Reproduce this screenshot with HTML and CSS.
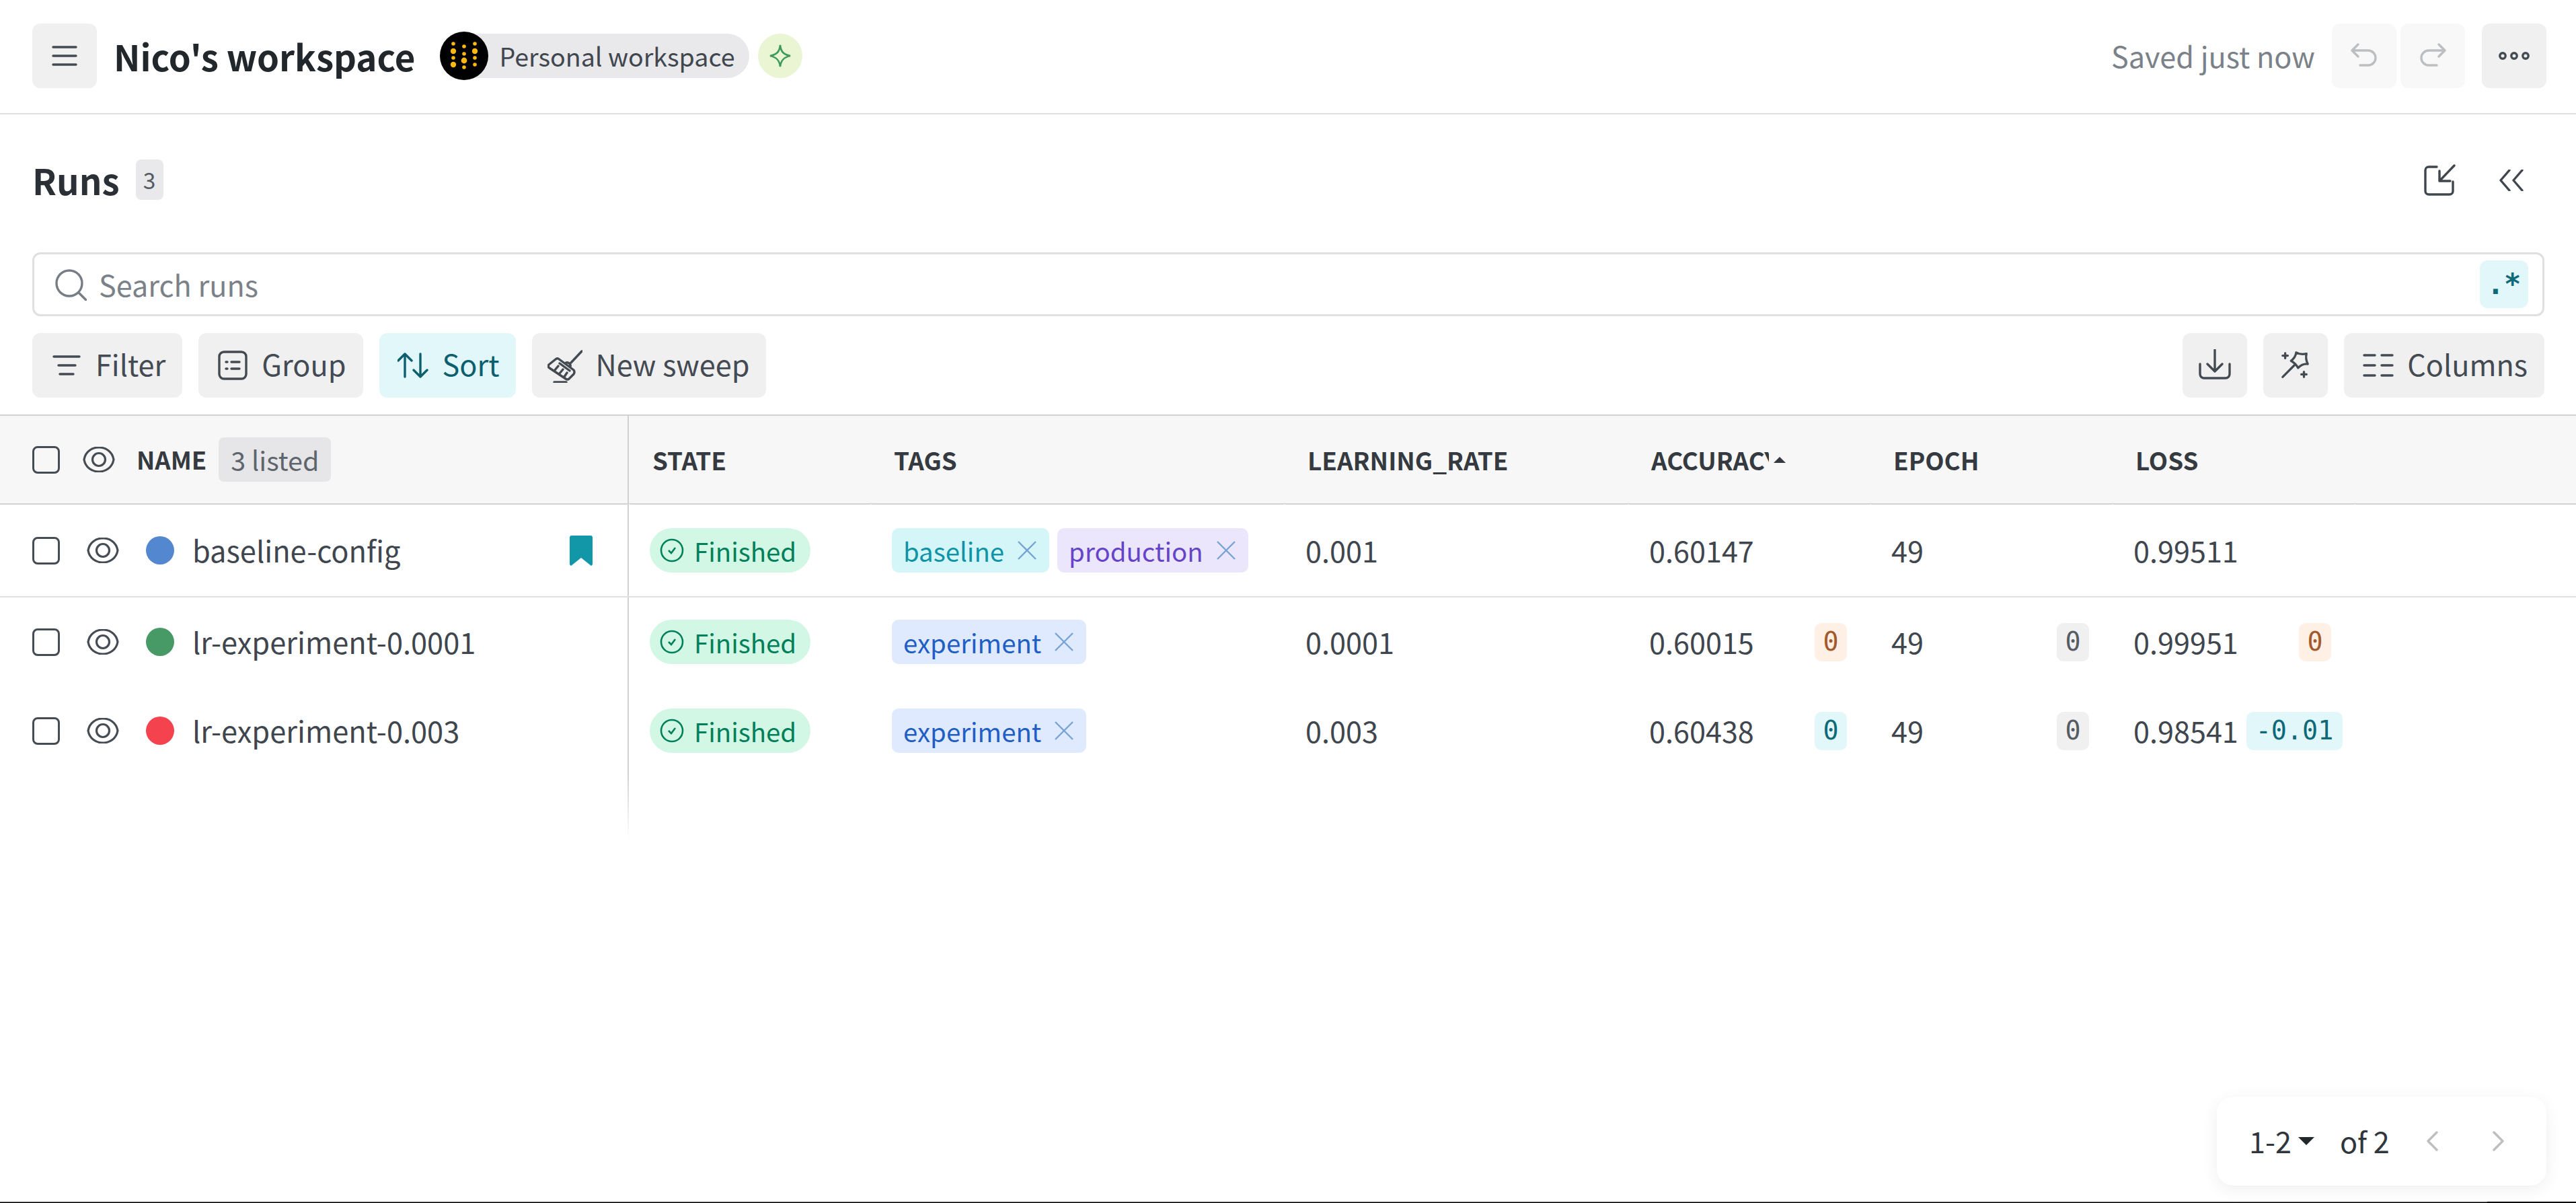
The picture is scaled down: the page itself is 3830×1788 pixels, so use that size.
FILE: index.html
```html
<!DOCTYPE html>
<html lang="en">
<head>
    <meta charset="UTF-8">
    <meta name="viewport" content="width=device-width, initial-scale=1.0">
    <link rel="stylesheet" href="styles.css">
    <title>Nico's workspace</title>
</head>
<body>
    <div class="page">
        <header class="topbar">
            <div class="btn btn-icon"><svg class="ico" viewBox="0 0 48 48"><path d="M7 11H41M7 24H41M7 37H41"/></svg></div>
            <h1 class="title">Nico's workspace</h1>
            <div class="ws-chip">
                <svg class="ws-avatar" viewBox="0 0 72 72">
                    <circle cx="36" cy="36" r="36" fill="#000"/>
                    <g fill="#fdb813">
                        <circle cx="20" cy="18" r="2.8"/><circle cx="20" cy="29" r="4.2"/><circle cx="20" cy="39" r="2.8"/><circle cx="20" cy="49" r="4.2"/>
                        <circle cx="36" cy="22" r="2.8"/><circle cx="36" cy="33" r="2.8"/><circle cx="36" cy="43" r="4.4"/><circle cx="36" cy="53" r="2.8"/>
                        <circle cx="52" cy="18" r="2.8"/><circle cx="52" cy="29" r="4.2"/><circle cx="52" cy="39" r="2.8"/><circle cx="52" cy="49" r="2.8"/>
                    </g>
                </svg>
                <span class="ws-name">Personal workspace</span>
            </div>
            <div class="spark"><svg viewBox="0 0 36 36"><path d="M18 2C19 12 23 16 33 18C23 20 19 25 18 34C17 25 13 20 3 18C13 16 17 12 18 2Z"/></svg></div>
            <div class="topbar-right">
                <span class="saved">Saved just now</span>
                <div class="undo-group">
                    <div class="btn btn-icon btn-faded"><svg class="ico" viewBox="0 0 48 48"><path d="M15 7L6 16L15 25M6 16H30a11 11 0 0 1 0 22H18"/></svg></div>
                    <div class="btn btn-icon btn-faded"><svg class="ico flip" viewBox="0 0 48 48"><path d="M15 7L6 16L15 25M6 16H30a11 11 0 0 1 0 22H18"/></svg></div>
                </div>
                <div class="btn btn-icon"><svg class="ico" viewBox="0 0 48 48"><circle cx="7" cy="24" r="4.2"/><circle cx="24" cy="24" r="4.2"/><circle cx="41" cy="24" r="4.2"/></svg></div>
            </div>
        </header>

        <div class="runs-head">
            <h2 class="runs-title">Runs</h2>
            <span class="runs-count">3</span>
            <div class="runs-actions">
                <svg class="ico" viewBox="0 0 48 48"><path d="M20 4H8a5 5 0 0 0-5 5V40a5 5 0 0 0 5 5H39a5 5 0 0 0 5-5V26M46 2L24 25M24 10V25H40"/></svg>
                <svg class="ico chev" viewBox="0 0 36 32"><path d="M15 1L2 16L15 31M34 1L21 16L34 31"/></svg>
            </div>
        </div>

        <div class="search">
            <svg class="ico search-ico" viewBox="0 0 48 48"><circle cx="22" cy="22" r="19"/><path d="M36 36L47 47"/></svg>
            <span class="search-text">Search runs</span>
            <span class="regex">.*</span>
        </div>

        <div class="toolbar">
            <div class="btn"><svg class="ico" viewBox="0 0 48 48"><path d="M5 11H43M12 24H37M14 37H34"/></svg>Filter</div>
            <div class="btn"><svg class="ico" viewBox="0 0 48 48"><rect x="4" y="4" width="40" height="40" rx="7"/><path d="M14 19H16M14 29H16M22 19H34M22 29H34"/></svg>Group</div>
            <div class="btn btn-on"><svg class="ico" viewBox="0 0 48 48"><path d="M11 41V7M1 17L11 7L21 17M34 7V41M24 31L34 41L44 31"/></svg>Sort</div>
            <div class="btn"><svg class="ico sweep" viewBox="14 10 52 52"><path d="M65 15L49 32M40 33a5 5 0 0 1 8 5M30 26L53 43Q55 46 53 49L46 56Q44 58 41 56L17 40Q14 38 16 35L26 27Q28 25 30 26ZM32 33L47 44M25 43L30 37M32 48L37 42M39 53L43 47M24 61H42"/></svg>New sweep</div>
            <div class="toolbar-right">
                <div class="btn btn-icon"><svg class="ico" viewBox="0 0 48 48"><path d="M24 1V32M13 22L24 33L35 22M2 22V37a6 6 0 0 0 6 6H40a6 6 0 0 0 6-6V22"/></svg></div>
                <div class="btn btn-icon"><svg class="ico" viewBox="10 8 50 50"><path d="M36 13Q42 17 52 15Q50 23 54 31Q46 30 39 37Q35 30 28 26Q35 21 36 13ZM15 51L33 33M15 18H23M19 14V22M44 47H52M48 43V51"/></svg></div>
                <div class="btn"><svg class="ico" viewBox="0 0 48 48"><path d="M3 9H19M29 9H45M3 24H19M29 24H45M3 39H19M29 39H45"/></svg>Columns</div>
            </div>
        </div>

        <div class="table">
            <div class="row row-head">
                <div class="cell-name">
                    <span class="check"></span>
                    <svg class="eye eye-head" viewBox="0 0 48 38"><path d="M2 19C6 -5 42 -5 46 19C42 43 6 43 2 19Z"/><circle cx="24" cy="19" r="9.5"/></svg>
                    <span class="name-label">NAME</span>
                    <span class="listed">3 listed</span>
                </div>
                <div class="th">STATE</div>
                <div class="th">TAGS</div>
                <div class="th">LEARNING_RATE</div>
                <div class="th"><span class="th-clip">ACCURACY</span><span class="sort-up"></span></div>
                <div class="th">EPOCH</div>
                <div class="th">LOSS</div>
                <div class="th"></div>
            </div>

            <div class="row row-first">
                <div class="cell-name">
                    <span class="check"></span>
                    <svg class="eye" viewBox="0 0 48 38"><path d="M2 19C6 -5 42 -5 46 19C42 43 6 43 2 19Z"/><circle cx="24" cy="19" r="9.5"/></svg>
                    <span class="dot dot-blue"></span>
                    <span class="run-name">baseline-config</span>
                    <svg class="bookmark" viewBox="0 0 34 45"><path d="M3 0H31a3 3 0 0 1 3 3V43L32 45L17 33L2 45L0 43V3a3 3 0 0 1 3-3Z"/></svg>
                </div>
                <div class="td td-state"><span class="state"><svg viewBox="0 0 36 36"><circle cx="18" cy="18" r="16"/><path d="M13 18L17 22L23 14"/></svg>Finished</span></div>
                <div class="td td-tags">
                    <span class="tag tag-teal">baseline<svg viewBox="0 0 28 28"><path d="M1 1L27 27M27 1L1 27"/></svg></span>
                    <span class="tag tag-purple">production<svg viewBox="0 0 28 28"><path d="M1 1L27 27M27 1L1 27"/></svg></span>
                </div>
                <div class="td">0.001</div>
                <div class="td">0.60147</div>
                <div class="td">49</div>
                <div class="td">0.99511</div>
                <div class="td"></div>
            </div>

            <div class="row">
                <div class="cell-name">
                    <span class="check"></span>
                    <svg class="eye" viewBox="0 0 48 38"><path d="M2 19C6 -5 42 -5 46 19C42 43 6 43 2 19Z"/><circle cx="24" cy="19" r="9.5"/></svg>
                    <span class="dot dot-green"></span>
                    <span class="run-name">lr-experiment-0.0001</span>
                </div>
                <div class="td td-state"><span class="state"><svg viewBox="0 0 36 36"><circle cx="18" cy="18" r="16"/><path d="M13 18L17 22L23 14"/></svg>Finished</span></div>
                <div class="td td-tags">
                    <span class="tag tag-blue">experiment<svg viewBox="0 0 28 28"><path d="M1 1L27 27M27 1L1 27"/></svg></span>
                </div>
                <div class="td">0.0001</div>
                <div class="td">0.60015<span class="delta delta-up">0</span></div>
                <div class="td">49<span class="delta">0</span></div>
                <div class="td">0.99951<span class="delta delta-up">0</span></div>
                <div class="td"></div>
            </div>

            <div class="row">
                <div class="cell-name">
                    <span class="check"></span>
                    <svg class="eye" viewBox="0 0 48 38"><path d="M2 19C6 -5 42 -5 46 19C42 43 6 43 2 19Z"/><circle cx="24" cy="19" r="9.5"/></svg>
                    <span class="dot dot-red"></span>
                    <span class="run-name">lr-experiment-0.003</span>
                </div>
                <div class="td td-state"><span class="state"><svg viewBox="0 0 36 36"><circle cx="18" cy="18" r="16"/><path d="M13 18L17 22L23 14"/></svg>Finished</span></div>
                <div class="td td-tags">
                    <span class="tag tag-blue">experiment<svg viewBox="0 0 28 28"><path d="M1 1L27 27M27 1L1 27"/></svg></span>
                </div>
                <div class="td">0.003</div>
                <div class="td">0.60438<span class="delta delta-down">0</span></div>
                <div class="td">49<span class="delta">0</span></div>
                <div class="td">0.98541<span class="delta delta-down delta-wide">-0.01</span></div>
                <div class="td"></div>
            </div>
            <div class="divider-fade"></div>
        </div>

        <div class="pager">
            <span>1-2</span><span class="pager-caret"></span>
            <span class="pager-of">of 2</span>
            <svg class="pager-arrow" viewBox="0 0 18 30"><path d="M16 2L3 15L16 28"/></svg>
            <svg class="pager-arrow pager-next" viewBox="0 0 18 30"><path d="M2 2L15 15L2 28"/></svg>
        </div>

        <div class="bottom-edge"><div class="bottom-edge-fill"></div></div>
    </div>
</body>
</html>
```

FILE: styles.css
```css
*{
    box-sizing: border-box;
}
body{
    margin: 0;
    background: #fff;
    color: #3f464e;
    font-family: "Noto Sans CJK JP", "Noto Sans", sans-serif;
    font-size: 38.4px;
    line-height: 1;
}
.page{
    position: relative;
    display: flex;
    flex-direction: column;
    height: 100vh;
    overflow: hidden;
}

/* icons */
.ico{
    width: 48px;
    height: 48px;
    flex: none;
    fill: none;
    stroke: currentColor;
    stroke-width: 3.4;
    stroke-linecap: round;
    stroke-linejoin: round;
}
.flip{
    transform: scaleX(-1);
}

/* buttons */
.btn{
    display: flex;
    align-items: center;
    gap: 19px;
    height: 96px;
    padding: 0 25px 0 27px;
    flex: none;
    border-radius: 12px;
    background: #f0f0f0;
    color: #434a52;
}
.btn-icon{
    justify-content: center;
    width: 96px;
    padding: 0;
}
.btn-faded{
    background: #f8f8f8;
    color: #bcbfc2;
}
.btn-on{
    background: #e1f7fa;
    color: #0e5f6e;
}

/* top bar */
.topbar{
    display: flex;
    align-items: center;
    flex: none;
    height: 170px;
    padding: 0 44px 2px 48px;
    border-bottom: 2px solid #e0e0e0;
}
.title{
    margin: 0 37px 0 25px;
    font-size: 52.8px;
    font-weight: 600;
    color: #22272c;
}
.ws-chip{
    display: flex;
    align-items: center;
    flex: none;
    height: 66px;
    width: 460px;
    border-radius: 33px;
    background: #e9e9eb;
}
.ws-avatar{
    width: 72px;
    height: 72px;
    flex: none;
}
.ws-name{
    margin-left: 16px;
    font-size: 37.6px;
    white-space: nowrap;
    color: #40474f;
}
.spark{
    display: flex;
    align-items: center;
    justify-content: center;
    width: 66px;
    height: 66px;
    margin-left: 13px;
    border-radius: 50%;
    background: #e9f5d3;
}
.spark svg{
    width: 36px;
    height: 36px;
    fill: none;
    stroke: #3f9a5f;
    stroke-width: 2.6;
}
.topbar-right{
    display: flex;
    align-items: center;
    margin-left: auto;
}
.saved{
    margin-right: 25px;
    font-size: 43.2px;
    color: #7b8189;
}
.undo-group{
    display: flex;
    gap: 6px;
    margin-right: 25px;
}

/* runs header */
.runs-head{
    display: flex;
    align-items: center;
    flex: none;
    height: 96px;
    margin-top: 49px;
    margin-bottom: 2px;
    padding: 0 78px 0 48px;
}
.runs-title{
    margin: 0 24px 0 0;
    font-size: 52.8px;
    font-weight: 600;
    color: #2b3036;
}
.runs-count{
    display: flex;
    align-items: center;
    justify-content: center;
    width: 41px;
    height: 60px;
    border-radius: 8px;
    background: #e9e9eb;
    font-size: 33.6px;
    color: #555c64;
}
.runs-actions{
    display: flex;
    align-items: center;
    gap: 65px;
    margin-left: auto;
    padding-top: 2px;
}
.chev{
    width: 36px;
    height: 32px;
}

/* search */
.search{
    display: flex;
    align-items: center;
    flex: none;
    height: 95px;
    margin: 58px 47px 0 48px;
    padding: 0 21px 0 30px;
    border: 3px solid #e0e0e0;
    border-radius: 12px;
}
.search-ico{
    color: #777d85;
}
.search-text{
    margin-left: 18px;
    font-size: 43.2px;
    color: #7b8189;
}
.regex{
    display: flex;
    align-items: center;
    justify-content: center;
    width: 72px;
    height: 71px;
    margin-left: auto;
    border-radius: 12px;
    background: #e1f7fa;
    font-family: "DejaVu Sans Mono", monospace;
    font-size: 42px;
    font-weight: 700;
    color: #0e6a78;
}

/* toolbar */
.toolbar{
    display: flex;
    gap: 24px;
    flex: none;
    margin-top: 25px;
    padding: 0 47px 0 48px;
    font-size: 43.2px;
}
.toolbar .btn{
    padding-bottom: 4px;
}
.toolbar .ico{
    margin-top: 4px;
}
.toolbar-right{
    display: flex;
    gap: 24px;
    margin-left: auto;
}
.sweep{
    width: 52px;
    height: 52px;
    margin-left: -4px;
}

/* table */
.table{
    flex: none;
    margin-top: 25px;
    border-top: 2px solid #d2d2d2;
}
.row{
    display: grid;
    grid-template-columns: 935px 359px 615px 511px 360px 360px 360px 1fr;
    height: 132px;
}
.row-head{
    background: #f7f7f7;
}
.row-head .cell-name{
    border-bottom: 2px solid #d2d2d2;
}
.row-first{
    height: 138px;
    border-bottom: 2px solid #e0e0e0;
}
.cell-name{
    display: flex;
    align-items: center;
    padding-left: 48px;
    border-right: 2px solid #d2d2d2;
}
.check{
    width: 41px;
    height: 41px;
    flex: none;
    border: 3.5px solid #454c54;
    border-radius: 8px;
}
.eye{
    width: 48px;
    height: 38px;
    flex: none;
    margin-left: 40px;
    fill: none;
    stroke: #454c54;
    stroke-width: 3.2;
}
.eye-head{
    margin-left: 34px;
}
.name-label{
    margin-left: 32px;
    font-size: 36.5px;
    font-weight: 600;
    color: #353a40;
}
.listed{
    display: flex;
    align-items: center;
    height: 66px;
    margin-left: 18px;
    padding: 0 18px;
    border-radius: 8px;
    background: #e6e6e8;
    font-size: 39.5px;
    color: #5f656c;
}
.dot{
    width: 42px;
    height: 42px;
    flex: none;
    margin-left: 40px;
    border-radius: 50%;
}
.dot-blue{
    background: #5387cf;
}
.dot-green{
    background: #479a66;
}
.dot-red{
    background: #f5424f;
}
.run-name{
    margin-left: 27px;
    font-size: 43.4px;
}
.bookmark{
    width: 34px;
    height: 45px;
    margin-left: auto;
    margin-right: 52px;
    fill: #1297a9;
}
.th{
    display: flex;
    align-items: center;
    padding-left: 35px;
    border-bottom: 2px solid #d2d2d2;
    border-bottom-left-radius: 3px;
    font-size: 36.8px;
    font-weight: 600;
    color: #353a40;
}
.th-clip{
    width: 175px;
    overflow: hidden;
    white-space: nowrap;
}
.sort-up{
    margin-left: 7px;
    border-left: 9px solid transparent;
    border-right: 9px solid transparent;
    border-bottom: 9px solid #353a40;
}
.td{
    display: flex;
    align-items: center;
    justify-content: space-between;
    padding: 0 34px 0 32px;
    font-size: 43.2px;
}
.td-state{
    padding-left: 31px;
    font-size: 38.4px;
}
.td-tags{
    justify-content: flex-start;
    gap: 12px;
    font-size: 38.4px;
}
.state{
    display: flex;
    align-items: center;
    gap: 15px;
    height: 66px;
    padding: 0 21px 0 15px;
    border-radius: 33px;
    background: #d2f7e4;
    color: #00805a;
}
.state svg{
    width: 36px;
    height: 36px;
    fill: none;
    stroke: currentColor;
    stroke-width: 2.6;
}
.tag{
    display: flex;
    align-items: center;
    gap: 20px;
    height: 66px;
    padding: 0 19px 0 17px;
    border-radius: 10px;
}
.tag svg{
    width: 28px;
    height: 28px;
    fill: none;
    stroke: #77a3d4;
    stroke-width: 2.4;
}
.tag-teal{
    background: #d4f6f8;
    color: #0f93a6;
}
.tag-purple{
    background: #ece6fd;
    color: #6544c9;
}
.tag-blue{
    background: #dfeafe;
    color: #1f5ec4;
}
.delta{
    display: flex;
    align-items: center;
    justify-content: center;
    width: 48px;
    height: 57px;
    border-radius: 10px;
    background: #f0f0f0;
    font-family: "DejaVu Sans Mono", monospace;
    font-size: 38.4px;
    color: #555c64;
}
.delta-up{
    background: #fff0e6;
    color: #a5592a;
}
.delta-down{
    background: #e1f7fa;
    color: #0e6a78;
}
.delta-wide{
    width: 143px;
    margin-right: -17px;
}
.divider-fade{
    width: 935px;
    height: 96px;
    background: linear-gradient(#d2d2d2, #fff) right top / 2px 100% no-repeat;
}

/* pagination */
.pager{
    position: absolute;
    left: 3296px;
    top: 1630px;
    display: flex;
    align-items: center;
    width: 490px;
    height: 132px;
    padding: 0 0 0 48px;
    border-radius: 24px;
    background: #fff;
    box-shadow: 0 5px 24px rgba(0, 0, 0, 0.07);
    color: #31363c;
    font-size: 43.2px;
}
.pager-caret{
    margin-left: 10px;
    border-left: 12px solid transparent;
    border-right: 12px solid transparent;
    border-top: 12px solid #22272c;
}
.pager-of{
    margin-left: 38px;
}
.pager-arrow{
    width: 18px;
    height: 30px;
    margin-left: 54px;
    fill: none;
    stroke: #bcbfc2;
    stroke-width: 3.4;
    stroke-linecap: round;
    stroke-linejoin: round;
}
.pager-next{
    margin-left: 81px;
}

/* screen edge */
.bottom-edge{
    margin-top: auto;
    height: 2px;
    flex: none;
    background: #000;
}
.bottom-edge-fill{
    width: 3698px;
    height: 1px;
    background: #666;
}
```
